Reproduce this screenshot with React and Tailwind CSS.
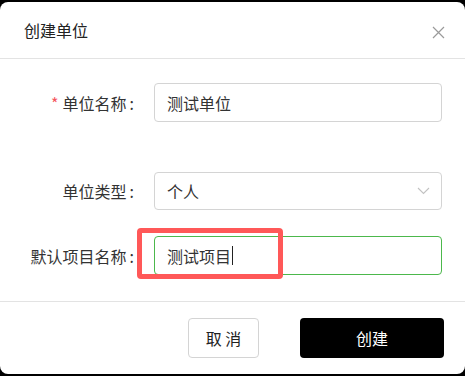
import React from "react";

function Label({ children, required }) {
  return (
    <div className="w-[134px] shrink-0 flex justify-end items-center text-[16px] text-[#333] mr-[20px] whitespace-nowrap">
      {required && <span className="text-[#f5555d] mr-[4px]">*</span>}
      <span>{children}</span>
      <span className="ml-[3px]">:</span>
    </div>
  );
}

export default function App() {
  const font = { fontFamily: '"Noto Sans CJK SC", "Noto Sans", sans-serif' };
  return (
    <div className="w-[465px] h-[376px] bg-black pt-[2px] overflow-hidden" style={font}>
      <div className="h-[372px] bg-white rounded-[8px] flex flex-col">
        <div className="h-[56px] border-b border-[#e3e3e3] flex items-center justify-between pl-[24px] pr-[20px] box-content">
          <span className="text-[16px] text-[#222]">创建单位</span>
          <svg width="13" height="13" viewBox="0 0 13 13" className="mt-[4px]">
            <path d="M1 1L12 12M12 1L1 12" stroke="#9a9a9a" strokeWidth="1.2" />
          </svg>
        </div>
        <div className="flex-1 flex flex-col pt-[24px]">
          <div className="flex items-center h-[39px]">
            <Label required>单位名称</Label>
            <div className="w-[288px] h-[39px] border border-[#d4d4d4] rounded-[4px] flex items-center pl-[12px] text-[16px] text-[#333]">
              测试单位
            </div>
          </div>
          <div className="flex items-center h-[38px] mt-[50px]">
            <Label>单位类型</Label>
            <div className="w-[288px] h-[38px] border border-[#d4d4d4] rounded-[4px] flex items-center justify-between pl-[12px] pr-[11px] text-[16px] text-[#333]">
              <span>个人</span>
              <svg width="13" height="8" viewBox="0 0 13 8">
                <path d="M1 1L6.5 6.5L12 1" stroke="#c2c2c2" strokeWidth="1.1" fill="none" />
              </svg>
            </div>
          </div>
          <div className="relative flex items-center h-[39px] mt-[26px]">
            <Label>默认项目名称</Label>
            <div className="w-[288px] h-[39px] border border-[#4cb84c] rounded-[4px] flex items-center pl-[12px] text-[16px] text-[#333]">
              测试项目<span className="inline-block w-[1px] h-[19px] bg-[#222] ml-[1px]"></span>
            </div>
            <div className="absolute left-[137px] top-[-8px] w-[146px] h-[51px] border-[5px] border-[#ff5858] rounded-[4px]"></div>
          </div>
        </div>
        <div className="h-[73px] border-t border-[#e3e3e3] flex items-start justify-end pt-[16px] pr-[21px] gap-[41px]">
          <button className="w-[71px] h-[40px] border border-[#d4d4d4] rounded-[4px] text-[16px] text-[#222] bg-white">取 消</button>
          <button className="w-[144px] h-[40px] rounded-[4px] text-[16px] text-white bg-black">创建</button>
        </div>
      </div>
    </div>
  );
}
